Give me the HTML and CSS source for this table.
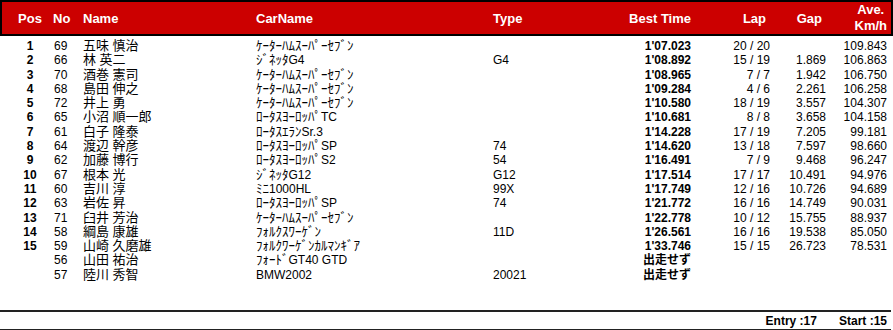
FILE: index.html
```html
<!DOCTYPE html>
<html lang="ja">
<head>
<meta charset="utf-8">
<title>Result</title>
<link rel="stylesheet" href="styles.css">
</head>
<body>
<div class="sheet">
  <div class="head">
    <div class="c pos">Pos</div>
    <div class="c no">No</div>
    <div class="c name">Name</div>
    <div class="c car">CarName</div>
    <div class="c type">Type</div>
    <div class="c best">Best Time</div>
    <div class="c lap hpad">Lap</div>
    <div class="c gap hpad">Gap</div>
    <div class="c ave"><span class="ave-h">Ave.<br>Km/h</span></div>
  </div>

  <div class="rows">
    <div class="row"><div class="c pos b">1</div><div class="c no">69</div><div class="c name">五味 慎治</div><div class="c car"><span class="kana">ｹｰﾀｰﾊﾑｽｰﾊﾟｰｾﾌﾞﾝ</span></div><div class="c type"></div><div class="c best b">1'07.023</div><div class="c lap">20 / 20</div><div class="c gap"></div><div class="c ave">109.843</div></div>
    <div class="row"><div class="c pos b">2</div><div class="c no">66</div><div class="c name">林 英二</div><div class="c car"><span class="kana">ｼﾞﾈｯﾀ</span>G4</div><div class="c type">G4</div><div class="c best b">1'08.892</div><div class="c lap">15 / 19</div><div class="c gap">1.869</div><div class="c ave">106.863</div></div>
    <div class="row"><div class="c pos b">3</div><div class="c no">70</div><div class="c name">酒巻 憲司</div><div class="c car"><span class="kana">ｹｰﾀｰﾊﾑｽｰﾊﾟｰｾﾌﾞﾝ</span></div><div class="c type"></div><div class="c best b">1'08.965</div><div class="c lap">7 / 7</div><div class="c gap">1.942</div><div class="c ave">106.750</div></div>
    <div class="row"><div class="c pos b">4</div><div class="c no">68</div><div class="c name">島田 伸之</div><div class="c car"><span class="kana">ｹｰﾀｰﾊﾑｽｰﾊﾟｰｾﾌﾞﾝ</span></div><div class="c type"></div><div class="c best b">1'09.284</div><div class="c lap">4 / 6</div><div class="c gap">2.261</div><div class="c ave">106.258</div></div>
    <div class="row"><div class="c pos b">5</div><div class="c no">72</div><div class="c name">井上 勇</div><div class="c car"><span class="kana">ｹｰﾀｰﾊﾑｽｰﾊﾟｰｾﾌﾞﾝ</span></div><div class="c type"></div><div class="c best b">1'10.580</div><div class="c lap">18 / 19</div><div class="c gap">3.557</div><div class="c ave">104.307</div></div>
    <div class="row"><div class="c pos b">6</div><div class="c no">65</div><div class="c name">小沼 順一郎</div><div class="c car"><span class="kana">ﾛｰﾀｽﾖｰﾛｯﾊﾟ</span>TC</div><div class="c type"></div><div class="c best b">1'10.681</div><div class="c lap">8 / 8</div><div class="c gap">3.658</div><div class="c ave">104.158</div></div>
    <div class="row"><div class="c pos b">7</div><div class="c no">61</div><div class="c name">白子 隆泰</div><div class="c car"><span class="kana">ﾛｰﾀｽｴﾗﾝ</span>Sr.3</div><div class="c type"></div><div class="c best b">1'14.228</div><div class="c lap">17 / 19</div><div class="c gap">7.205</div><div class="c ave">99.181</div></div>
    <div class="row"><div class="c pos b">8</div><div class="c no">64</div><div class="c name">渡辺 幹彦</div><div class="c car"><span class="kana">ﾛｰﾀｽﾖｰﾛｯﾊﾟ</span>SP</div><div class="c type">74</div><div class="c best b">1'14.620</div><div class="c lap">13 / 18</div><div class="c gap">7.597</div><div class="c ave">98.660</div></div>
    <div class="row"><div class="c pos b">9</div><div class="c no">62</div><div class="c name">加藤 博行</div><div class="c car"><span class="kana">ﾛｰﾀｽﾖｰﾛｯﾊﾟ</span>S2</div><div class="c type">54</div><div class="c best b">1'16.491</div><div class="c lap">7 / 9</div><div class="c gap">9.468</div><div class="c ave">96.247</div></div>
    <div class="row"><div class="c pos b">10</div><div class="c no">67</div><div class="c name">根本 光</div><div class="c car"><span class="kana">ｼﾞﾈｯﾀ</span>G12</div><div class="c type">G12</div><div class="c best b">1'17.514</div><div class="c lap">17 / 17</div><div class="c gap">10.491</div><div class="c ave">94.976</div></div>
    <div class="row"><div class="c pos b">11</div><div class="c no">60</div><div class="c name">吉川 淳</div><div class="c car"><span class="kana">ﾐﾆ</span>1000HL</div><div class="c type">99X</div><div class="c best b">1'17.749</div><div class="c lap">12 / 16</div><div class="c gap">10.726</div><div class="c ave">94.689</div></div>
    <div class="row"><div class="c pos b">12</div><div class="c no">63</div><div class="c name">岩佐 昇</div><div class="c car"><span class="kana">ﾛｰﾀｽﾖｰﾛｯﾊﾟ</span>SP</div><div class="c type">74</div><div class="c best b">1'21.772</div><div class="c lap">16 / 16</div><div class="c gap">14.749</div><div class="c ave">90.031</div></div>
    <div class="row"><div class="c pos b">13</div><div class="c no">71</div><div class="c name">臼井 芳治</div><div class="c car"><span class="kana">ｹｰﾀｰﾊﾑｽｰﾊﾟｰｾﾌﾞﾝ</span></div><div class="c type"></div><div class="c best b">1'22.778</div><div class="c lap">10 / 12</div><div class="c gap">15.755</div><div class="c ave">88.937</div></div>
    <div class="row"><div class="c pos b">14</div><div class="c no">58</div><div class="c name">綱島 康雄</div><div class="c car"><span class="kana">ﾌｫﾙｸｽﾜｰｹﾞﾝ</span></div><div class="c type">11D</div><div class="c best b">1'26.561</div><div class="c lap">16 / 16</div><div class="c gap">19.538</div><div class="c ave">85.050</div></div>
    <div class="row"><div class="c pos b">15</div><div class="c no">59</div><div class="c name">山崎 久磨雄</div><div class="c car"><span class="kana">ﾌｫﾙｸﾜｰｹﾞﾝｶﾙﾏﾝｷﾞｱ</span></div><div class="c type"></div><div class="c best b">1'33.746</div><div class="c lap">15 / 15</div><div class="c gap">26.723</div><div class="c ave">78.531</div></div>
    <div class="row"><div class="c pos b"></div><div class="c no">56</div><div class="c name">山田 祐治</div><div class="c car"><span class="kana">ﾌｫｰﾄﾞ</span>GT40 GTD</div><div class="c type"></div><div class="c best b">出走せず</div><div class="c lap"></div><div class="c gap"></div><div class="c ave"></div></div>
    <div class="row"><div class="c pos b"></div><div class="c no">57</div><div class="c name">陸川 秀智</div><div class="c car">BMW2002</div><div class="c type">20021</div><div class="c best b">出走せず</div><div class="c lap"></div><div class="c gap"></div><div class="c ave"></div></div>
  </div>

  <div class="foot">
    <span class="stat">Entry :17</span>
    <span class="stat">Start :15</span>
  </div>
</div>
</body>
</html>
```

FILE: styles.css
```css
html, body {
  margin: 0;
  padding: 0;
  background: #ffffff;
  overflow: hidden;
}

.sheet {
  width: 893px;
  height: 330px;
  font-family: "Liberation Sans", Arial, "Noto Sans CJK JP", sans-serif;
  font-size: 12px;
  color: #000;
}

.head,
.row {
  display: grid;
  grid-template-columns: 53px 30px 173px 237px 100px 98px 79px 56px 61px;
}

.head {
  height: 36px;
  background: #cc0000;
  box-shadow: inset 0 0 0 2px #000;
  color: #fff;
  font-weight: bold;
  font-size: 13px;
  align-items: center;
  box-sizing: border-box;
}

.c {
  white-space: nowrap;
  overflow: visible;
}

.pos {
  text-align: center;
  padding-left: 7px;
}
.no { text-align: left; padding-left: 1px; }
.head .no { padding-left: 0; }
.best, .lap, .gap, .ave { text-align: right; }

.head .hpad { padding-right: 4px; }
.head .ave { padding-right: 0; }

.ave-h {
  display: inline-block;
  text-align: center;
  line-height: 16px;
}

.rows {
  padding-top: 3px;
}

.row {
  height: 14.3px;
  line-height: 14px;
}

.b { font-weight: bold; }

.name {
  font-family: "Liberation Sans", "Noto Sans CJK JP", sans-serif;
  font-size: 13px;
}

.car {
  font-family: "Liberation Sans", "Noto Sans CJK JP", sans-serif;
}

.kana {
  font-size: 13px;
}

.foot {
  margin-top: 28px;
  width: 887px;
  height: 17px;
  border-top: 2px solid #222;
  border-bottom: 2px solid #222;
  display: flex;
  justify-content: flex-end;
  align-items: center;
  gap: 22px;
  padding-right: 4px;
  box-sizing: content-box;
  font-weight: bold;
}

.stat { white-space: nowrap; }
```
